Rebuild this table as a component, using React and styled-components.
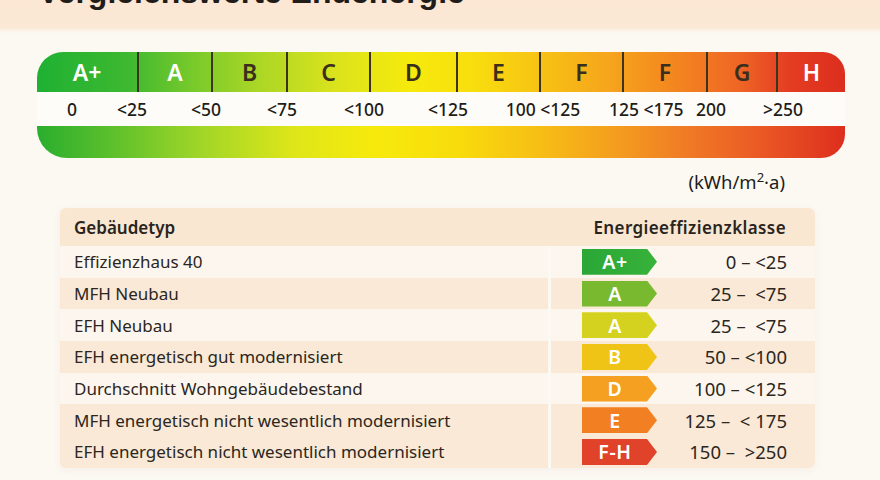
import React from "react";
import styled, { createGlobalStyle } from "styled-components";

const Global = createGlobalStyle`
  html, body { margin: 0; padding: 0; background: #fcf8f2; }
  body { font-family: "Noto Sans", "Open Sans", sans-serif; color: #2b2621; }
  * { box-sizing: border-box; }
`;

const Page = styled.div`
  width: 880px;
  height: 480px;
  overflow: hidden;
  background: #fcf8f2;
`;

const Header = styled.header`
  height: 33px;
  overflow: hidden;
  padding-left: 38px;
  background: linear-gradient(180deg, #fbe7d3 0%, #fbe8d5 82%, #fcf8f2 100%);
`;

const Title = styled.h1`
  margin: -24px 0 0;
  font-family: "Liberation Sans", Arial, sans-serif;
  font-weight: 700;
  font-size: 32px;
  line-height: 32px;
  color: #1f1c19;
  white-space: nowrap;
`;

const Scale = styled.section`
  margin: 19px 35px 0 37px;
  display: flex;
  flex-direction: column;
`;

const ClassBar = styled.div`
  height: 40px;
  display: grid;
  grid-template-columns: ${(p) => p.$cols};
  border-radius: 26px 22px 0 0;
  overflow: hidden;
  background: linear-gradient(
    90deg,
    #1fb133 0%,
    #3db830 11%,
    #76c92b 19%,
    #a9d626 27%,
    #dbe31c 37%,
    #f6ea0c 46%,
    #f8de0e 54%,
    #f7c014 63%,
    #f6a41d 71%,
    #f3861f 79%,
    #ef6526 87%,
    #e43d22 93%,
    #dc2e1d 100%
  );
`;

const Segment = styled.div`
  display: flex;
  align-items: center;
  justify-content: center;
  font-family: "Noto Sans", sans-serif;
  font-weight: 600;
  font-size: 23px;
  color: ${(p) => (p.$light ? "#ffffff" : "#3a2e1c")};
  border-left: ${(p) => (p.$first ? "none" : "2px solid #3b3520")};
`;

const Labels = styled.div`
  height: 34px;
  display: grid;
  grid-template-columns: ${(p) => p.$cols};
  align-items: center;
  background: #fefcf8;
`;

const Label = styled.span`
  text-align: center;
  font-size: 17.5px;
  font-weight: 500;
  color: #1f1c19;
  white-space: pre;
`;

const GradientBar = styled.div`
  height: 32px;
  border-radius: 0 0 24px 30px;
  background: linear-gradient(
    90deg,
    #2aae2e 0%,
    #55bd2c 8%,
    #9fd528 20%,
    #dfe618 32%,
    #f7ea0b 42%,
    #f8dc0c 52%,
    #f7bf15 62%,
    #f49c1f 72%,
    #f07c25 80%,
    #eb5b25 89%,
    #dd2e1d 100%
  );
`;

const Unit = styled.div`
  margin: 13px 95px 0 0;
  text-align: right;
  font-size: 18.5px;
  line-height: 22px;
  color: #1f1c19;
  sup {
    font-size: 13px;
    vertical-align: 7px;
    line-height: 0;
  }
`;

const Table = styled.div`
  margin: 15px 65px 0 60px;
  display: flex;
  flex-direction: column;
  border-radius: 6px;
  overflow: hidden;
  box-shadow: 0 2px 10px rgba(120, 80, 30, 0.05);
`;

const HeadRow = styled.div`
  height: 38px;
  display: flex;
  align-items: center;
  justify-content: space-between;
  padding: 0 29px 0 14px;
  background: #f9e7d2;
  font-weight: 600;
  font-size: 17px;
  color: #2a241e;
`;

const HeadTitle = styled.span`
  letter-spacing: ${(p) => p.$spacing || "0"};
`;

const Row = styled.div`
  height: 31.7px;
  display: grid;
  grid-template-columns: 488px 1fr;
  column-gap: 3px;
`;

const Cell = styled.div`
  display: flex;
  align-items: center;
  background: ${(p) => (p.$shade ? "#f9e9d6" : "#fdf6ee")};
  font-size: 17px;
  color: #2b2621;
  white-space: nowrap;
`;

const NameCell = styled(Cell)`
  padding-left: 14px;
`;

const ClassCell = styled(Cell)`
  padding: 0 28px 0 31px;
  justify-content: space-between;
`;

const Badge = styled.span`
  width: 75px;
  height: 26px;
  padding-right: 9px;
  display: flex;
  align-items: center;
  justify-content: center;
  background: ${(p) => p.$color};
  clip-path: polygon(0 0, calc(100% - 10px) 0, 100% 50%, calc(100% - 10px) 100%, 0 100%);
  color: #fff;
  font-weight: 600;
  font-size: 19.5px;
  letter-spacing: 0.6px;
`;

const Range = styled.span`
  white-space: pre;
  font-size: 18.5px;
  color: #2b2621;
`;

const segCols = "100px 74px 75px 83px 87px 83px 83px 84px 70px 1fr";
const segments = [
  { t: "A+", light: true },
  { t: "A", light: true },
  { t: "B" },
  { t: "C" },
  { t: "D" },
  { t: "E" },
  { t: "F" },
  { t: "F" },
  { t: "G" },
  { t: "H", light: true },
];

const labelCols = "70px 50px 98px 54px 110px 58px 132px 72px 60px 84px 1fr";
const labels = ["0", "<25", "<50", "<75", "<100", "<125", "100 <125", "125 <175", "200", ">250"];

const rows = [
  { name: "Effizienzhaus 40", cls: "A+", color: "linear-gradient(90deg,#2aa737,#37b23a)", range: "0 – <25", shade: false },
  { name: "MFH Neubau", cls: "A", color: "#79b92f", range: "25 –  <75", shade: true },
  { name: "EFH Neubau", cls: "A", color: "#d4d21f", range: "25 –  <75", shade: false },
  { name: "EFH energetisch gut modernisiert", cls: "B", color: "#f0c317", range: "50 – <100", shade: true },
  { name: "Durchschnitt Wohngebäudebestand", cls: "D", color: "#f5a020", range: "100 – <125", shade: false },
  { name: "MFH energetisch nicht wesentlich modernisiert", cls: "E", color: "#f27f22", range: "125 –  < 175", shade: true },
  { name: "EFH energetisch nicht wesentlich modernisiert", cls: "F-H", color: "#e0432a", range: "150 –  >250", shade: true },
];

export default function App() {
  return (
    <Page>
      <Global />
      <Header>
        <Title>Vergleichswerte Endenergie</Title>
      </Header>
      <Scale>
        <ClassBar $cols={segCols}>
          {segments.map((s, i) => (
            <Segment key={i} $light={s.light} $first={i === 0}>
              {s.t}
            </Segment>
          ))}
        </ClassBar>
        <Labels $cols={labelCols}>
          {labels.map((l, i) => (
            <Label key={i}>{l}</Label>
          ))}
        </Labels>
        <GradientBar />
      </Scale>
      <Unit>
        (kWh/m<sup>2</sup>·a)
      </Unit>
      <Table>
        <HeadRow>
          <HeadTitle>Gebäudetyp</HeadTitle>
          <HeadTitle $spacing="0.4px">Energieeffizienzklasse</HeadTitle>
        </HeadRow>
        {rows.map((r, i) => (
          <Row key={i}>
            <NameCell $shade={r.shade}>{r.name}</NameCell>
            <ClassCell $shade={r.shade}>
              <Badge $color={r.color}>{r.cls}</Badge>
              <Range>{r.range}</Range>
            </ClassCell>
          </Row>
        ))}
      </Table>
    </Page>
  );
}
